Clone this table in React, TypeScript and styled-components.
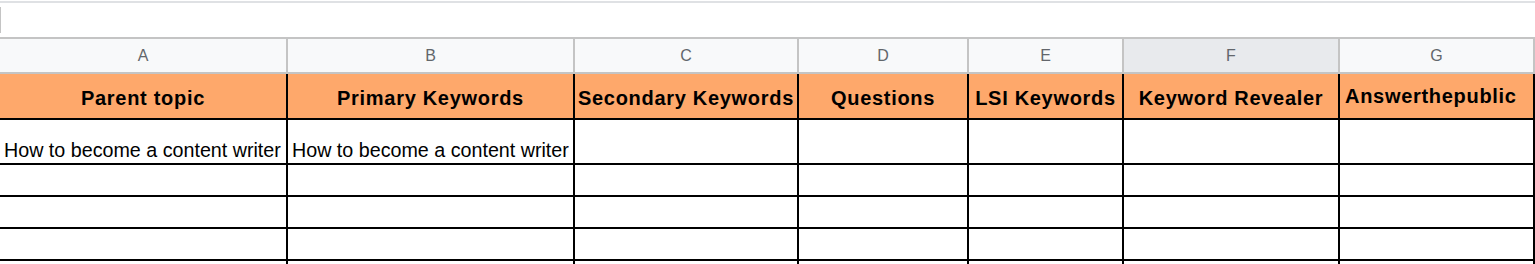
import React from "react";
import styled, { createGlobalStyle } from "styled-components";

const GlobalStyle = createGlobalStyle`
  html, body {
    margin: 0;
    padding: 0;
    background: #ffffff;
    overflow: hidden;
  }
  body {
    font-family: "Liberation Sans", Arial, sans-serif;
  }
`;

const Page = styled.div`
  width: 1535px;
  height: 264px;
  overflow: hidden;
  background: #ffffff;
`;

const FormulaBar = styled.div`
  box-sizing: border-box;
  margin-top: 1px;
  height: 36px;
  border-top: 2px solid #dfe1e4;
  padding-top: 4px;
`;

const FormulaInput = styled.div`
  height: 26px;
  width: 100%;
  border-left: 1px solid #c4c4c4;
`;

const Grid = styled.div`
  display: grid;
  grid-template-columns: 288px 287px 224px 170px 155px 216px 195px;
  grid-template-rows: 37px 46px 45px 32px 32px 32px 32px;
`;

const ColHeader = styled.div<{ $selected?: boolean }>`
  box-sizing: border-box;
  border-top: 2px solid #c4c4c4;
  border-bottom: 2px solid #c4c4c4;
  border-right: 2px solid #c4c4c4;
  background: ${(p) => (p.$selected ? "#e8eaed" : "#f8f9fa")};
  color: #62666b;
  font-family: "Liberation Sans", Arial, sans-serif;
  font-size: 16px;
  display: flex;
  align-items: center;
  justify-content: center;
`;

const HeadCell = styled.div<{ $align?: "left" | "center" }>`
  box-sizing: border-box;
  background: #fea86b;
  border-right: 2px solid #000000;
  border-bottom: 2px solid #000000;
  display: flex;
  align-items: center;
  justify-content: ${(p) => (p.$align === "left" ? "flex-start" : "center")};
  padding: ${(p) => (p.$align === "left" ? "0 5px 0 5px" : "3px 0 0 0")};
  font-family: "Liberation Sans", Arial, sans-serif;
  font-weight: 700;
  font-size: 20px;
  letter-spacing: 0.7px;
  color: #000000;
  white-space: nowrap;
  overflow: visible;
  line-height: 1;
`;

const DataCell = styled.div`
  box-sizing: border-box;
  background: #ffffff;
  border-right: 2px solid #000000;
  border-bottom: 2px solid #000000;
  display: flex;
  align-items: flex-end;
  padding: 0 0 1px 4px;
  font-family: "Liberation Sans", Arial, sans-serif;
  font-size: 19.7px;
  color: #000000;
  white-space: nowrap;
  overflow: hidden;
  line-height: 1.15;
`;

const letters = ["A", "B", "C", "D", "E", "F", "G"];
const headings: { text: string; align: "left" | "center" }[] = [
  { text: "Parent topic", align: "center" },
  { text: "Primary Keywords", align: "center" },
  { text: "Secondary Keywords", align: "center" },
  { text: "Questions", align: "center" },
  { text: "LSI Keywords", align: "center" },
  { text: "Keyword Revealer", align: "center" },
  { text: "Answerthepublic", align: "left" },
];

const rows: string[][] = [
  ["How to become a content writer", "How to become a content writer", "", "", "", "", ""],
  ["", "", "", "", "", "", ""],
  ["", "", "", "", "", "", ""],
  ["", "", "", "", "", "", ""],
  ["", "", "", "", "", "", ""],
];

export default function App() {
  return (
    <Page>
      <GlobalStyle />
      <FormulaBar>
        <FormulaInput />
      </FormulaBar>
      <Grid>
        {letters.map((l) => (
          <ColHeader key={l} $selected={l === "F"}>
            {l}
          </ColHeader>
        ))}
        {headings.map((h) => (
          <HeadCell key={h.text} $align={h.align}>
            {h.text}
          </HeadCell>
        ))}
        {rows.map((r, ri) =>
          r.map((c, ci) => <DataCell key={`${ri}-${ci}`}>{c}</DataCell>)
        )}
      </Grid>
    </Page>
  );
}
